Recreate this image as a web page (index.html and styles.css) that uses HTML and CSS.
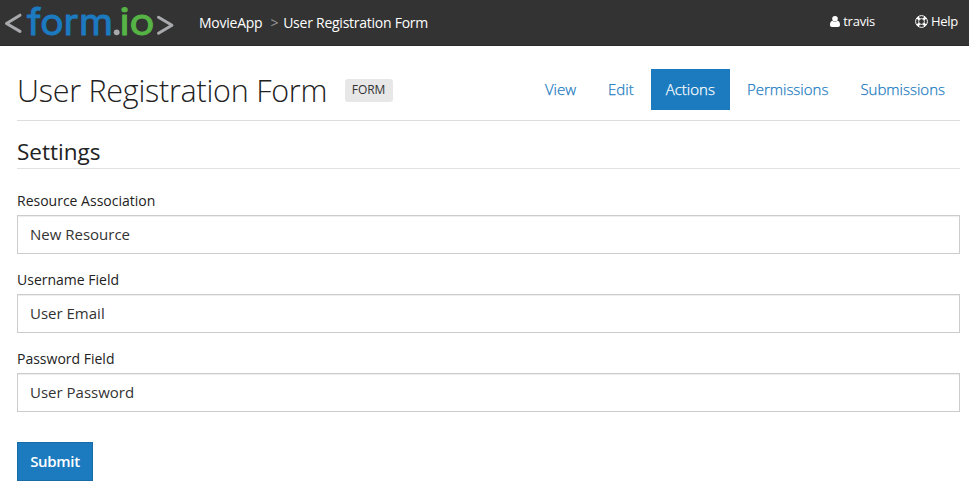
FILE: index.html
```html
<!DOCTYPE html>
<html lang="en">
<head>
<meta charset="utf-8">
<title>User Registration Form</title>
<link rel="stylesheet" href="styles.css">
</head>
<body>
<header class="navbar">
  <svg class="logo" width="176" height="45" viewBox="0 0 176 45">
    <path class="bracket" d="M20 15.200L6.500 23.500L20 31.400M158.500 17.300L172 25.300L158.500 33.300"/>
    <text class="logo-form" x="27" y="34.500" textLength="86" lengthAdjust="spacingAndGlyphs">form</text>
    <circle class="logo-dot" cx="116.700" cy="32.300" r="2.900"/>
    <text class="logo-io" x="119.500" y="34.500" textLength="35" lengthAdjust="spacingAndGlyphs">io</text>
  </svg>
  <nav class="crumbs"><a>MovieApp</a><span class="sep">&gt;</span><a>User Registration Form</a></nav>
  <div class="account">
    <a class="account-link"><svg width="10" height="11" viewBox="0 0 10 11"><circle cx="5" cy="2.800" r="2.800"/><path d="M2.300 4.800C.6 5.200 0 6.800 0 9.100C0 10.300.8 11 1.900 11H8.100C9.200 11 10 10.300 10 9.100C10 6.800 9.400 5.200 7.700 4.800C6.300 6.300 3.700 6.300 2.300 4.800Z"/></svg><span class="user">travis</span></a>
    <a class="account-link"><svg width="13" height="13" viewBox="0 0 13 13"><g fill="none" stroke="#fff"><circle cx="6.500" cy="6.500" r="5.900"/><circle cx="6.500" cy="6.500" r="2.900"/><path stroke-width="2.600" d="M2.500 2.500L4.400 4.400M10.500 2.500L8.600 4.400M2.500 10.500L4.400 8.600M10.500 10.500L8.600 8.600"/></g></svg><span class="help">Help</span></a>
  </div>
</header>
<main class="page">
  <div class="page-head">
    <h1>User Registration Form</h1><span class="badge">FORM</span>
    <nav class="tabs"><a>View</a><a>Edit</a><a class="active">Actions</a><a>Permissions</a><a>Submissions</a></nav>
  </div>
  <h2>Settings</h2>
  <form>
    <div class="field"><label for="a">Resource Association</label><input id="a" value="New Resource"></div>
    <div class="field"><label for="b">Username Field</label><input id="b" value="User Email"></div>
    <div class="field"><label for="c">Password Field</label><input id="c" value="User Password"></div>
    <button type="button">Submit</button>
  </form>
</main>
</body>
</html>
```
FILE: styles.css
```css
* { box-sizing: border-box; }
body { margin: 0; background: #fff; color: #222; font-family: "Open Sans", sans-serif; overflow: hidden; }
.navbar { display: flex; align-items: flex-start; height: 46px; background: #333; border-bottom: 1px solid #2b2b2b; color: #fff; }
.logo { flex: none; display: block; }
.logo text { font-family: Inter, sans-serif; font-size: 36.5px; font-weight: 400; stroke-width: 1px; stroke-linejoin: round; }
.logo-form { fill: #1c7ac0; stroke: #1c7ac0; }
.logo-io { fill: #56b345; stroke: #56b345; }
.logo-dot { fill: #a7a9ac; }
.bracket { fill: none; stroke: #a7a9ac; stroke-width: 3; stroke-linecap: round; stroke-linejoin: round; }
.crumbs { display: flex; margin-left: 23px; font-size: 14px; line-height: 45px; letter-spacing: -.25px; white-space: nowrap; }
.sep { color: #999; margin: 0 5px 0 8px; }
.account { display: flex; margin-left: auto; margin-right: 11px; gap: 40px; font-size: 13px; line-height: 42px; letter-spacing: -.25px; }
.account-link { display: flex; align-items: center; gap: 3px; }
.account-link svg { fill: #fff; }
.page { width: 943px; margin-left: 17px; }
.page-head { display: flex; height: 75px; border-bottom: 1px solid #ddd; }
h1 { margin: 0; font-size: 30.5px; font-weight: 300; line-height: 88px; letter-spacing: -.25px; white-space: nowrap; width: 328px; }
.badge { flex: none; width: 48px; height: 23px; margin-top: 33px; border-radius: 3px; background: #e7e7e7; color: #333; font-size: 12px; line-height: 22px; text-align: center; letter-spacing: -.1px; padding-right: 1px; }
.tabs { display: flex; margin: 23px 0 0 auto; height: 41px; font-size: 15px; font-weight: 300; line-height: 41px; gap: 2px; -webkit-text-stroke: .25px currentColor; }
.tabs a { color: #1c7bbf; padding: 0 15px; }
.tabs .active { background: #1c7bbf; color: #fff; }
h2 { margin: 0; height: 48px; border-bottom: 1px solid #e1e1e1; font-size: 22.5px; font-weight: 400; line-height: 62px; }
form { padding-top: 20px; }
.field { height: 79px; padding-top: 1px; }
label { display: block; height: 25px; font-size: 14px; line-height: 22px; }
input { display: block; width: 100%; height: 39px; padding: 0 12px 2px; border: 1px solid #ccc; border-radius: 0; box-shadow: inset 0 1px 1px rgba(0,0,0,.075); color: #333; background: #fff; font: 15px "Open Sans", sans-serif; }
button { display: block; width: 76px; height: 39px; margin-top: 16px; border: 1px solid #196ca8; background: #1c7bbf; color: #fff; padding: 0 0 2px; font: 600 15px "Open Sans", sans-serif; letter-spacing: -.3px; }
```
